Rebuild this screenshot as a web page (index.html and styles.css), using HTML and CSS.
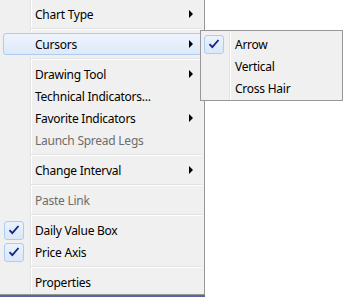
FILE: index.html
```html
<!DOCTYPE html>
<html lang="en">
<head>
<meta charset="UTF-8">
<title>Chart Menu</title>
<link rel="stylesheet" href="styles.css">
</head>
<body>

<div class="menu main-menu">
    <div class="item has-sub"><span class="check"></span><span class="label">Chart Type</span><span class="arrow"></span></div>
    <div class="sep"></div>
    <div class="item has-sub active"><span class="check"></span><span class="label">Cursors</span><span class="arrow"></span></div>
    <div class="sep"></div>
    <div class="item has-sub"><span class="check"></span><span class="label">Drawing Tool</span><span class="arrow"></span></div>
    <div class="item"><span class="check"></span><span class="label">Technical Indicators...</span></div>
    <div class="item has-sub"><span class="check"></span><span class="label">Favorite Indicators</span><span class="arrow"></span></div>
    <div class="item disabled"><span class="check"></span><span class="label">Launch Spread Legs</span></div>
    <div class="sep"></div>
    <div class="item has-sub"><span class="check"></span><span class="label">Change Interval</span><span class="arrow"></span></div>
    <div class="sep"></div>
    <div class="item disabled"><span class="check"></span><span class="label">Paste Link</span></div>
    <div class="sep"></div>
    <div class="item checked"><span class="check"><svg width="12" height="10" viewBox="0 0 12 10"><path d="M1.5 5.2 L4.3 8.2 L10.5 1" fill="none" stroke="#15218e" stroke-width="1.8"/></svg></span><span class="label">Daily Value Box</span></div>
    <div class="item checked"><span class="check"><svg width="12" height="10" viewBox="0 0 12 10"><path d="M1.5 5.2 L4.3 8.2 L10.5 1" fill="none" stroke="#15218e" stroke-width="1.8"/></svg></span><span class="label">Price Axis</span></div>
    <div class="sep"></div>
    <div class="item"><span class="check"></span><span class="label">Properties</span></div>
</div>
<div class="taskbar"></div>

<div class="menu sub-menu">
    <div class="item checked"><span class="check"><svg width="12" height="10" viewBox="0 0 12 10"><path d="M1.5 5.2 L4.3 8.2 L10.5 1" fill="none" stroke="#15218e" stroke-width="1.8"/></svg></span><span class="label">Arrow</span></div>
    <div class="item"><span class="check"></span><span class="label">Vertical</span></div>
    <div class="item"><span class="check"></span><span class="label">Cross Hair</span></div>
</div>

</body>
</html>
```

FILE: styles.css
```css
body {
    margin: 0;
    background: #fff;
    font-family: "Noto Sans", "Open Sans", sans-serif;
    font-size: 12px;
    letter-spacing: -0.25px;
    color: #000;
    height: 297px;
    overflow: hidden;
}
.menu {
    background-color: #f0f0f0;
    border: 1px solid #979797;
    box-sizing: border-box;
}
.main-menu {
    width: 206px;
    margin: -1px 0 0 -1px;
    padding: 3px 2px 1px 3px;
    background-image: linear-gradient(to right, transparent 30px, #e2e3e3 30px, #e2e3e3 31px, #fff 31px, #fff 32px, transparent 32px);
}
.sub-menu {
    position: absolute;
    left: 200px;
    top: 30px;
    width: 143px;
    padding: 2px 2px 1px 2px;
    background-image: linear-gradient(to right, transparent 28px, #e2e3e3 28px, #e2e3e3 29px, #fff 29px, #fff 30px, transparent 30px);
}
.taskbar {
    width: 205px;
    height: 3px;
    background: #56689a;
}
.item {
    display: flex;
    align-items: center;
    height: 22px;
    box-sizing: border-box;
    border: 1px solid transparent;
    border-radius: 3px;
}
.item.active {
    border-color: #aeccf0;
    background: linear-gradient(#eef4fc, #dde9f9);
}
.check {
    width: 20px;
    height: 19px;
    flex: none;
    box-sizing: border-box;
    display: flex;
    align-items: center;
    justify-content: center;
    border-radius: 3px;
}
.checked .check {
    border: 1px solid #aeccf0;
    background: linear-gradient(#eaf2fc, #dbe8f9);
}
.label {
    margin-left: 11px;
    flex: 1;
    white-space: nowrap;
}
.disabled .label {
    color: #6d6d6d;
}
.arrow {
    width: 0;
    height: 0;
    border-top: 4px solid transparent;
    border-bottom: 4px solid transparent;
    border-left: 4px solid #000;
    margin-right: 8px;
}
.sep {
    height: 8px;
    margin-left: 28px;
    background: linear-gradient(transparent 3px, #e0e0e0 3px, #e0e0e0 4px, #fff 4px, #fff 5px, transparent 5px);
}
```
